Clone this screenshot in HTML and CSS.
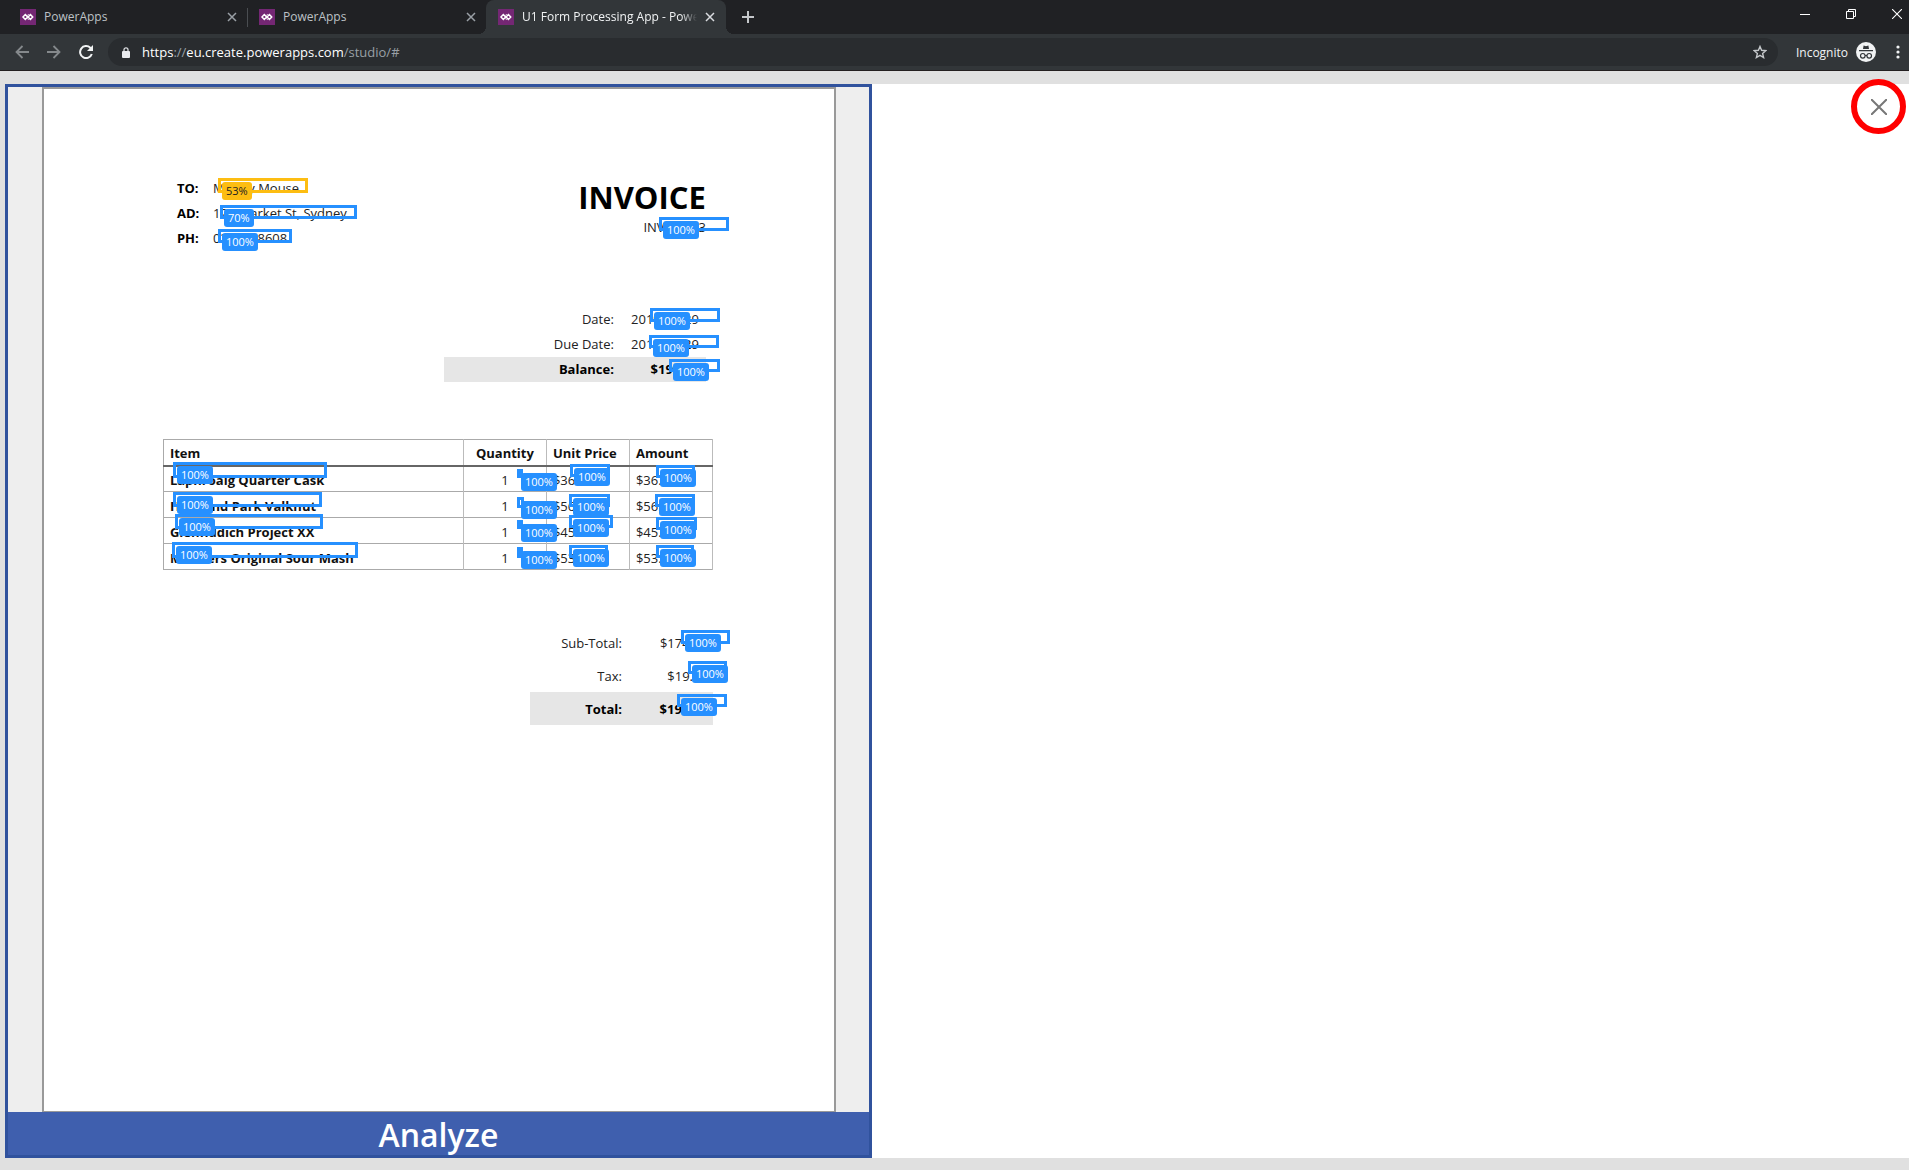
FILE: index.html
```html
<!DOCTYPE html>
<html lang="en">
<head>
<meta charset="utf-8">
<title>U1 Form Processing App - PowerApps</title>
<link rel="stylesheet" href="styles.css">
</head>
<body>
<svg class="sprite" aria-hidden="true">
  <symbol id="powerapps" viewBox="0 0 16 16">
    <rect width="16" height="16" fill="#742774"/>
    <path d="M5.3 5.6 7.6 8 5.3 10.4 3 8zM10.4 5.6 12.7 8 10.4 10.4 8.1 8z" fill="none" stroke="#fff" stroke-width="1.5"/>
    <path d="M7.2 6.6 8.6 5.2M7.2 9.4 8.6 10.8" stroke="#fff" stroke-width="1"/>
  </symbol>
  <symbol id="cross" viewBox="0 0 10 10">
    <path d="M1 1 9 9M9 1 1 9" fill="none" stroke="currentColor" stroke-width="1.5"/>
  </symbol>
</svg>

<header class="browser">
  <div class="tabstrip">
    <div class="tab">
      <svg class="favicon"><use href="#powerapps"/></svg>
      <span class="tab-title">PowerApps</span>
      <button class="tab-close" aria-label="Close tab"><svg><use href="#cross"/></svg></button>
    </div>
    <div class="tab divided">
      <svg class="favicon"><use href="#powerapps"/></svg>
      <span class="tab-title">PowerApps</span>
      <button class="tab-close" aria-label="Close tab"><svg><use href="#cross"/></svg></button>
    </div>
    <div class="tab active">
      <svg class="favicon"><use href="#powerapps"/></svg>
      <span class="tab-title">U1 Form Processing App - PowerApps</span>
      <button class="tab-close" aria-label="Close tab"><svg><use href="#cross"/></svg></button>
    </div>
    <button class="new-tab" aria-label="New tab">
      <svg width="12" height="12" viewBox="0 0 12 12"><path d="M6 0V12M0 6H12" stroke="currentColor" stroke-width="2"/></svg>
    </button>
    <div class="window-controls">
      <button aria-label="Minimize"><svg width="10" height="10" viewBox="0 0 10 10"><path d="M0 5.5H10" stroke="#fff"/></svg></button>
      <button aria-label="Restore"><svg width="10" height="10" viewBox="0 0 10 10"><path d="M.5 2.5H7.500V9.500H.5zM2.500 2.500V.5H9.500V7.500H7.500" fill="none" stroke="#fff"/></svg></button>
      <button aria-label="Close"><svg width="10" height="10" viewBox="0 0 10 10"><path d="M0 0 10 10M10 0 0 10" stroke="#fff" stroke-width="1.100"/></svg></button>
    </div>
  </div>
  <div class="toolbar">
    <button class="nav" aria-label="Back"><svg width="14" height="14" viewBox="0 0 14 14"><path d="M14 7H1.500M7.500 1 1.500 7 7.500 13" fill="none" stroke="currentColor" stroke-width="1.800"/></svg></button>
    <button class="nav" aria-label="Forward"><svg width="14" height="14" viewBox="0 0 14 14"><path d="M0 7H12.500M6.500 1 12.500 7 6.500 13" fill="none" stroke="currentColor" stroke-width="1.800"/></svg></button>
    <button class="nav reload" aria-label="Reload"><svg width="14" height="14" viewBox="0 0 14 14"><path d="M12.800 9A6 6 0 1 1 11.300 2.800L12.500 4" fill="none" stroke="currentColor" stroke-width="2"/><path d="M14 0V6H8z" fill="currentColor"/></svg></button>
    <div class="omnibox">
      <svg width="8" height="11" viewBox="0 0 8 11"><path d="M2 5V2.800a2 2 0 0 1 4 0V5" fill="none" stroke="#dadce0" stroke-width="1.300"/><rect y="4" width="8" height="7" rx="1" fill="#e8eaed"/></svg>
      <a class="url" href="#"><b>https</b>://<b>eu.create.powerapps.com</b>/studio/#</a>
      <button class="star" aria-label="Bookmark this page"><svg width="14" height="14" viewBox="0 0 14 14"><path d="M7 1.500 8.600 5.300 12.800 5.700 9.600 8.400 10.600 12.500 7 10.300 3.400 12.500 4.400 8.400 1.200 5.700 5.400 5.300z" fill="none" stroke="#c4c7ca" stroke-width="1.400"/></svg></button>
    </div>
    <span class="incognito">Incognito
      <svg width="20" height="20" viewBox="0 0 20 20"><circle cx="10" cy="10" r="10" fill="#f1f3f4"/><path d="M7 7 7.600 3.600 10 4.200 12.400 3.600 13 7zM3 8H17V9.200H3z" fill="#323639"/><circle cx="6.800" cy="13.800" r="2.300" fill="none" stroke="#323639" stroke-width="1.200"/><circle cx="13.200" cy="13.800" r="2.300" fill="none" stroke="#323639" stroke-width="1.200"/><path d="M9 13.500H11" stroke="#323639"/></svg>
    </span>
    <button class="menu" aria-label="Menu"><svg width="4" height="14" viewBox="0 0 4 14"><g fill="#f1f3f4"><circle cx="2" cy="2" r="1.600"/><circle cx="2" cy="7" r="1.600"/><circle cx="2" cy="12" r="1.600"/></g></svg></button>
  </div>
</header>

<main class="app">
  <section class="processor">
    <div class="viewer">
      <article class="sheet">
        <div class="invoice">
          <div class="invoice-head">
            <table class="contact">
              <tr><th>TO:</th><td>Mickey Mouse</td></tr>
              <tr><th>AD:</th><td>123 Market St, Sydney</td></tr>
              <tr><th>PH:</th><td>0212348608</td></tr>
            </table>
            <div class="heading">
              <h1>INVOICE</h1>
              <p>INV-00123</p>
            </div>
          </div>
          <table class="dates">
            <tr><th>Date:</th><td>2019-10-29</td></tr>
            <tr><th>Due Date:</th><td>2019-11-29</td></tr>
            <tr class="strong"><th>Balance:</th><td>$192.23</td></tr>
          </table>
          <table class="items">
            <thead>
              <tr><th>Item</th><th class="qty">Quantity</th><th class="money">Unit Price</th><th class="money">Amount</th></tr>
            </thead>
            <tbody>
              <tr><th>Laphroaig Quarter Cask</th><td class="qty">1</td><td>$36.00</td><td>$36.00</td></tr>
              <tr><th>Highland Park Valknut</th><td class="qty">1</td><td>$56.00</td><td>$56.00</td></tr>
              <tr><th>Glenfiddich Project XX</th><td class="qty">1</td><td>$45.00</td><td>$45.00</td></tr>
              <tr><th>Michters Original Sour Mash</th><td class="qty">1</td><td>$53.00</td><td>$53.00</td></tr>
            </tbody>
          </table>
          <table class="summary">
            <tr><th>Sub-Total:</th><td>$174.75</td></tr>
            <tr><th>Tax:</th><td>$19.22</td></tr>
            <tr class="strong"><th>Total:</th><td>$192.23</td></tr>
          </table>

          <!-- Recognised fields, placed over the scanned document -->
          <div class="field low" style="left:55px;top:89px;width:90px;height:15px"><span>53%</span></div>
          <div class="field" style="left:57px;top:116px;width:137px;height:14px"><span>70%</span></div>
          <div class="field" style="left:55px;top:140px;width:74px;height:14px"><span>100%</span></div>
          <div class="field" style="left:496px;top:128px;width:70px;height:14px"><span>100%</span></div>
          <div class="field" style="left:487px;top:219px;width:70px;height:14px"><span>100%</span></div>
          <div class="field" style="left:486px;top:246px;width:70px;height:13px"><span>100%</span></div>
          <div class="field" style="left:506px;top:270px;width:51px;height:13px"><span>100%</span></div>

          <div class="field" style="left:10px;top:373px;width:154px;height:16px"><span>100%</span></div>
          <div class="field" style="left:354px;top:380px;width:6px;height:9px"><span>100%</span></div>
          <div class="field" style="left:407px;top:375px;width:40px;height:13px"><span>100%</span></div>
          <div class="field" style="left:493px;top:376px;width:39px;height:13px"><span>100%</span></div>

          <div class="field" style="left:10px;top:403px;width:149px;height:15px"><span>100%</span></div>
          <div class="field" style="left:354px;top:408px;width:7px;height:11px"><span>100%</span></div>
          <div class="field" style="left:406px;top:405px;width:41px;height:13px"><span>100%</span></div>
          <div class="field" style="left:492px;top:405px;width:40px;height:13px"><span>100%</span></div>

          <div class="field" style="left:12px;top:425px;width:148px;height:15px"><span>100%</span></div>
          <div class="field" style="left:354px;top:431px;width:6px;height:9px"><span>100%</span></div>
          <div class="field" style="left:406px;top:426px;width:44px;height:13px"><span>100%</span></div>
          <div class="field" style="left:493px;top:428px;width:41px;height:13px"><span>100%</span></div>

          <div class="field" style="left:9px;top:453px;width:186px;height:16px"><span>100%</span></div>
          <div class="field" style="left:354px;top:458px;width:6px;height:11px"><span>100%</span></div>
          <div class="field" style="left:406px;top:456px;width:39px;height:13px"><span>100%</span></div>
          <div class="field" style="left:493px;top:456px;width:38px;height:13px"><span>100%</span></div>

          <div class="field" style="left:518px;top:541px;width:49px;height:14px"><span>100%</span></div>
          <div class="field" style="left:525px;top:572px;width:39px;height:13px"><span>100%</span></div>
          <div class="field" style="left:514px;top:605px;width:50px;height:13px"><span>100%</span></div>
        </div>
      </article>
    </div>
    <button class="analyze">Analyze</button>
  </section>
  <button class="exit" aria-label="Close preview"><svg width="16" height="16" viewBox="0 0 16 16"><path d="M0 0 16 16M16 0 0 16" stroke="#777" stroke-width="2"/></svg></button>
</main>
</body>
</html>
```
FILE: styles.css
```css
* { box-sizing: border-box; }

body {
  display: flex;
  flex-direction: column;
  min-height: 100vh;
  margin: 0;
  background: #e0e0e0;
  font-family: "Open Sans", "Noto Sans", sans-serif;
  font-size: 12px;
}

button {
  padding: 0;
  border: 0;
  background: none;
  color: inherit;
  font-family: inherit;
}

button svg { display: block; }

.sprite { position: absolute; width: 0; height: 0; }

/* Browser chrome */
.browser {
  background: #323639;
  border-bottom: 1px solid #231f20;
  color: #f1f3f4;
}

.tabstrip {
  display: flex;
  height: 34px;
  padding-left: 8px;
  background: #202124;
}

.tab {
  display: flex;
  align-items: center;
  gap: 8px;
  width: 239px;
  padding: 0 10px 0 12px;
  color: #bdc1c6;
}

.tab.divided {
  background: linear-gradient(#4a4d51, #4a4d51) 0 8px / 1px 19px no-repeat;
}

.tab.active {
  position: relative;
  width: 240px;
  padding-right: 11px;
  border-radius: 8px 8px 0 0;
  background: #323639;
  color: #f1f3f4;
}

.tab.active::before,
.tab.active::after {
  content: "";
  position: absolute;
  bottom: 0;
  width: 8px;
  height: 8px;
}

.tab.active::before {
  right: 100%;
  background: radial-gradient(circle at 0 0, transparent 8px, #323639 8px);
}

.tab.active::after {
  left: 100%;
  background: radial-gradient(circle at 100% 0, transparent 8px, #323639 8px);
}

.favicon { flex: none; width: 16px; height: 16px; }

.tab-title {
  flex: 1;
  overflow: hidden;
  white-space: nowrap;
  line-height: 20px;
}

.active .tab-title {
  -webkit-mask-image: linear-gradient(to left, transparent, #000 16px);
  mask-image: linear-gradient(to left, transparent, #000 16px);
}

.tab-close { width: 10px; height: 10px; color: #9aa0a6; }
.tab-close svg { width: 10px; height: 10px; }
.active .tab-close { color: #dadce0; }

.new-tab { padding: 0 16px; color: #c4c7ca; }

.window-controls {
  display: flex;
  gap: 36px;
  height: 28px;
  margin-left: auto;
  padding-right: 7px;
}

.toolbar {
  display: flex;
  align-items: center;
  height: 36px;
  padding: 0 9px 0 6px;
}

.nav {
  display: grid;
  place-items: center;
  width: 32px;
  height: 28px;
  color: #85898c;
}

.nav.reload { color: #f1f3f4; }

.omnibox {
  display: flex;
  flex: 1;
  align-items: center;
  gap: 12px;
  height: 28px;
  margin: 0 18px 0 6px;
  padding: 0 11px 0 14px;
  border-radius: 14px;
  background: #292c2f;
}

.omnibox > svg, .star { flex: none; }

.url {
  flex: 1;
  color: #9aa0a6;
  font-size: 13px;
  text-decoration: none;
}

.url b { color: #fff; font-weight: 400; }

.incognito { display: flex; align-items: center; gap: 8px; }

.menu { margin-left: 20px; }

/* App canvas */
.app {
  position: relative;
  display: flex;
  flex: 1;
  margin: 13px 0 12px 5px;
  background: #fff;
}

.processor {
  display: flex;
  flex-direction: column;
  width: calc(46% - 9px);
  min-width: 640px;
  border: 3px solid #30529d;
}

.viewer {
  display: flex;
  flex: 1;
  padding: 0 33px 0 34px;
  background: #eee;
}

.sheet {
  flex: 1;
  padding-right: 2px;
  border: 2px solid #999;
  border-bottom-width: 1px;
  background: #fff;
  color: #222;
}

.invoice {
  position: relative;
  width: 550px;
  margin: 0 auto;
  padding-top: 87px;
  font-size: 13px;
}

table { border-collapse: collapse; }
th, td { padding: 0; white-space: nowrap; text-align: left; }

.invoice-head { display: flex; justify-content: space-between; padding: 0 7px 0 14px; }

.contact tr, .dates tr { height: 25px; }
.contact th, .contact td, .dates th, .dates td { padding-bottom: 2px; }
.contact th { width: 36px; color: #000; }

.heading { padding-top: 1px; text-align: right; }

h1 {
  margin: 0;
  color: #000;
  font-size: 31px;
  line-height: 40px;
}

.heading p { margin: 0; line-height: 20px; }

.dates {
  width: 262px;
  margin: 56px 7px 57px auto;
}

.dates th, .dates td, .summary th, .summary td { text-align: right; font-weight: 400; }
.dates td { width: 92px; padding-right: 7px; }

.strong { background: #e6e6e6; }
.dates .strong > *, .summary .strong > * { color: #000; font-weight: 700; }

.items { width: 100%; table-layout: fixed; border: 1px solid #aaa; }
.items tr { height: 26px; border-bottom: 1px solid #aaa; }
.items thead tr { border-bottom: 2px solid #666; }
.items th, .items td { padding: 2px 0 0 6px; border-right: 1px solid #bbb; }
.items th { color: #111; }
.items .qty { width: 83px; padding-left: 0; text-align: center; }
.items .money { width: 83px; }

.summary { width: 183px; margin: 56px 0 0 auto; }
.summary tr { height: 33px; }
.summary th, .summary td { padding-top: 1px; }
.summary td { width: 91px; padding-right: 5px; }

/* Recognised field with its confidence */
.field {
  position: absolute;
  border: 3px solid #2690ff;
}

.field span {
  position: absolute;
  top: 1px;
  left: 1px;
  padding: 0 4px;
  border-radius: 3px;
  background: #2690ff;
  color: #fff;
  font-size: 11px;
  line-height: 18px;
}

.field.low { border-color: #fdbd12; }
.field.low span { background: #fdbd12; color: #222; }

.analyze {
  height: 43px;
  padding-top: 3px;
  background: #3f5fae;
  color: #fff;
  font-size: 32px;
  font-weight: 600;
  line-height: 40px;
}

.exit {
  position: absolute;
  top: -5px;
  right: 3px;
  display: grid;
  place-items: center;
  width: 55px;
  height: 55px;
  border: 6px solid #f00;
  border-radius: 50%;
}
```
